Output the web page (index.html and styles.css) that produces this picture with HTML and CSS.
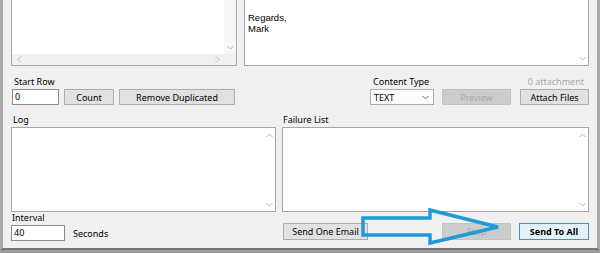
FILE: index.html
```html
<!DOCTYPE html>
<html lang="en">
<head>
  <meta charset="UTF-8" />
  <title>Mail Sender</title>
  <link rel="stylesheet" href="styles.css">
</head>
<body>
  <div class="window">
    <div class="top">
      <div class="box recipients">
        <div class="box-main">
          <div class="box-text"></div>
          <div class="vscroll"><span class="chev"></span><svg class="chev" width="7" height="5" viewBox="0 0 7 5"><polyline points="0.5,1 3.5,4 6.5,1"/></svg></div>
        </div>
        <div class="hscroll">
          <svg class="chev" width="5" height="7" viewBox="0 0 5 7"><polyline points="4,0.5 1,3.5 4,6.5"/></svg>
          <svg class="chev" width="5" height="7" viewBox="0 0 5 7"><polyline points="1,0.5 4,3.5 1,6.5"/></svg>
        </div>
      </div>
      <div class="box message">
        <div class="box-main">
          <div class="box-text msg">
            <div class="msg-line">Regards,</div>
            <div class="msg-line">Mark</div>
          </div>
          <div class="vscroll"><span class="chev"></span><svg class="chev" width="7" height="5" viewBox="0 0 7 5"><polyline points="0.5,1 3.5,4 6.5,1"/></svg></div>
        </div>
      </div>
    </div>

    <div class="options">
      <div class="group start-row">
        <div class="label">Start Row</div>
        <div class="controls">
          <div class="input w-start">0</div>
          <button class="btn w-count">Count</button>
          <button class="btn w-remove">Remove Duplicated</button>
        </div>
      </div>
      <div class="group content-type">
        <div class="label">Content Type</div>
        <div class="controls">
          <div class="select">TEXT<svg width="7" height="5" viewBox="0 0 7 5"><polyline points="0.5,1 3.5,4 6.5,1"/></svg></div>
          <button class="btn disabled w-small">Preview</button>
        </div>
      </div>
      <div class="group attach">
        <div class="label muted">0 attachment</div>
        <div class="controls">
          <button class="btn w-small">Attach Files</button>
        </div>
      </div>
    </div>

    <div class="lists">
      <div class="group log">
        <div class="label">Log</div>
        <div class="box list">
          <div class="box-main">
            <div class="box-text"></div>
            <div class="vscroll"><svg class="chev" width="7" height="5" viewBox="0 0 7 5"><polyline points="0.5,4 3.5,1 6.5,4"/></svg><svg class="chev" width="7" height="5" viewBox="0 0 7 5"><polyline points="0.5,1 3.5,4 6.5,1"/></svg></div>
          </div>
        </div>
      </div>
      <div class="group failures">
        <div class="label">Failure List</div>
        <div class="box list">
          <div class="box-main">
            <div class="box-text"></div>
            <div class="vscroll"><svg class="chev" width="7" height="5" viewBox="0 0 7 5"><polyline points="0.5,4 3.5,1 6.5,4"/></svg><svg class="chev" width="7" height="5" viewBox="0 0 7 5"><polyline points="0.5,1 3.5,4 6.5,1"/></svg></div>
          </div>
        </div>
      </div>
    </div>

    <div class="actions">
      <div class="group interval">
        <div class="label">Interval</div>
        <div class="controls">
          <div class="input w-interval">40</div>
          <span class="unit">Seconds</span>
        </div>
      </div>
      <button class="btn w-one">Send One Email</button>
      <div class="spacer"></div>
      <button class="btn disabled w-small">Stop</button>
      <button class="btn primary w-all">Send To All</button>
    </div>

    <svg class="callout" width="600" height="253" viewBox="0 0 600 253">
      <polygon points="363,218 430,218 430,210 498,227 430,243 430,235 363,235"/>
    </svg>
  </div>
</body>
</html>
```

FILE: styles.css
```css
html, body { margin: 0; padding: 0; background: #9c9c9c; overflow: hidden; }
body { font-family: "Noto Sans", "Liberation Sans", sans-serif; font-size: 9px; color: #000; }

.window { position: relative; width: 600px; height: 250px; box-sizing: border-box; background: #f0f0f0; border-left: 3px solid #a8a8a8; border-right: 3px solid #a8a8a8; border-bottom: 2px solid #777; padding: 0 8px; }

.box { background: #fff; border: 1px solid #a5a5a5; box-sizing: border-box; display: flex; flex-direction: column; }
.box-main { flex: 1; display: flex; min-height: 0; }
.box-text { flex: 1; }
.vscroll { width: 12px; display: flex; flex-direction: column; justify-content: space-between; align-items: center; padding: 5px 0 4px; box-sizing: border-box; }
.hscroll { height: 11px; background: #f0f0f0; display: flex; justify-content: space-between; align-items: center; padding: 0 16px 0 5px; }
.chev { display: block; }
svg polyline { fill: none; stroke: #b4b4b4; stroke-width: 1; }

.top { height: 66px; display: flex; gap: 7px; }
.top .box { border-top: none; }
.recipients { width: 226px; }
.recipients .vscroll { background: #f6f6f6; }
.message { flex: 1; }
.msg { padding: 12px 0 0 3px; font-family: "Liberation Sans", Arial, sans-serif; font-size: 9.5px; }
.msg-line { height: 11px; line-height: 11px; }

.group { display: flex; flex-direction: column; }
.label { height: 12px; line-height: 12px; padding-left: 2px; white-space: nowrap; }
.muted { color: #a8a8a8; text-align: right; padding: 0 5px 0 0; }
.controls { display: flex; align-items: center; gap: 5px; margin-top: 1px; }

.options { display: flex; margin-top: 10px; }
.start-row { margin-left: 1px; }
.content-type { margin-left: auto; }
.content-type .label { padding-left: 3px; }
.content-type .controls { gap: 8px; }
.attach { margin-left: 9px; }

.input { height: 16px; box-sizing: border-box; background: #fff; border: 1px solid #8c8c8c; line-height: 14px; padding-left: 2px; }
.w-start { width: 47px; }
.w-interval { width: 54px; height: 16px; }

.btn { height: 16px; box-sizing: border-box; margin: 0; padding: 0; font: inherit; color: #000; background: #e1e1e1; border: 1px solid #adadad; text-align: center; white-space: nowrap; }
.btn.disabled { background: #cccccc; border-color: #c2c2c2; color: #a9a9a9; }
.btn.primary { background: #e5f1fb; border-color: #4a8fd0; font-weight: bold; }
.w-count { width: 50px; }
.w-remove { width: 116px; }
.w-small { width: 69px; }

.select { width: 64px; height: 16px; box-sizing: border-box; border: 1px solid #adadad; background: #fbfbfb; display: flex; align-items: center; justify-content: space-between; padding: 0 4px 0 3px; }
.select polyline { stroke: #6e6e6e; }

.lists { display: flex; gap: 6px; margin-top: 9px; }
.log { width: 265px; }
.failures { flex: 1; }
.list { height: 85px; margin-top: 1px; }
.failures .label { padding-left: 1px; }

.actions { display: flex; align-items: flex-end; }
.interval { width: 271px; }
.interval .label { padding-left: 1px; }
.interval .controls { gap: 8px; margin-top: 1px; }
.actions .btn { height: 17px; margin-bottom: 1px; }
.w-one { width: 85px; margin-left: 1px; }
.spacer { flex: 1; }
.w-all { width: 70px; margin-left: 8px; }

.callout { position: absolute; left: -3px; top: 0; pointer-events: none; }
.callout polygon { fill: none; stroke: #1e9ad8; stroke-width: 3.5; stroke-linejoin: miter; }
```
